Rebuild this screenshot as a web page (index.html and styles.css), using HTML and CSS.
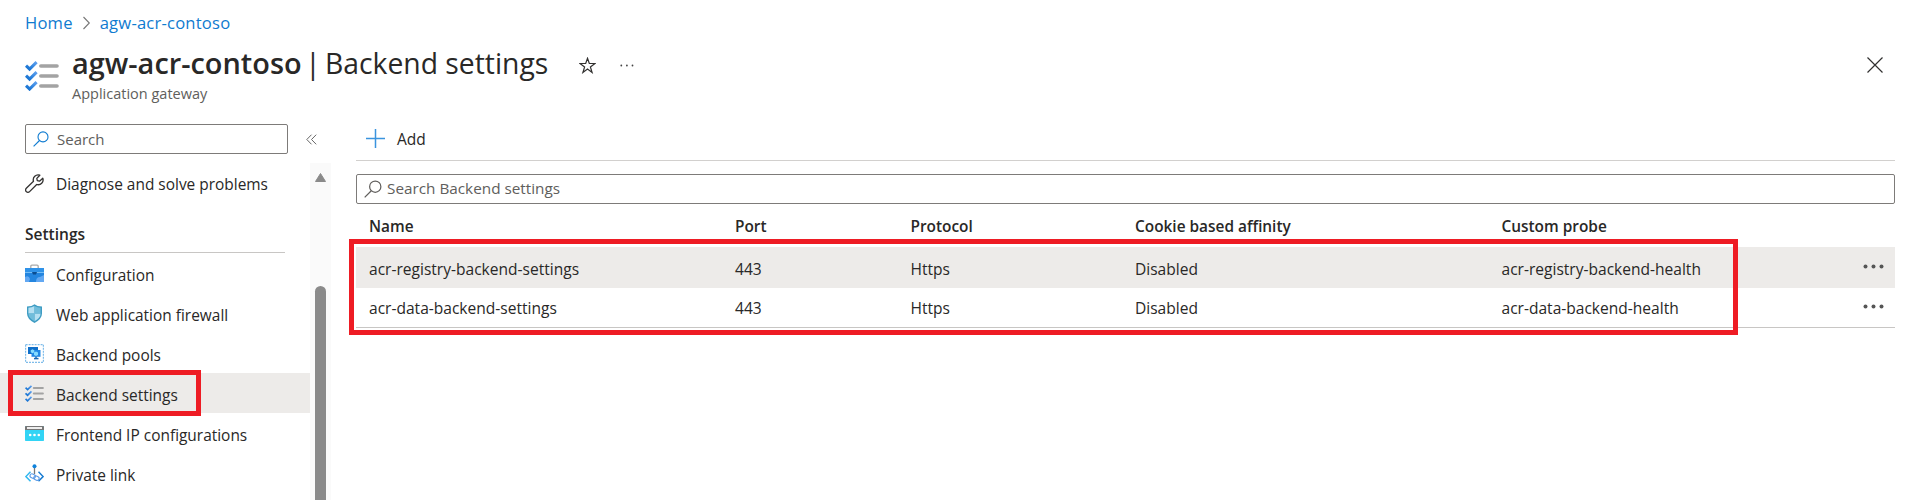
FILE: index.html
```html
<!DOCTYPE html>
<html lang="en">
<head>
<meta charset="utf-8">
<title>agw-acr-contoso | Backend settings</title>
<link rel="stylesheet" href="styles.css">
</head>
<body>
<svg class="defs" width="0" height="0">
  <defs>
    <linearGradient id="tick" x1="0" y1="1" x2="1" y2="0"><stop offset="0" stop-color="#0f6fd0"/><stop offset="1" stop-color="#5ea0ef"/></linearGradient>
    <symbol id="checklist" viewBox="0 0 34 30">
      <g fill="none" stroke="url(#tick)" stroke-width="3.1"><path d="M1 4.6 4.6 8 11.600 1.200"/><path d="M1 14.600 4.600 18 11.600 11.200"/><path d="M1 24.600 4.600 28 11.600 21.200"/></g>
      <g stroke="#a3a3a3" stroke-width="3.6" stroke-linecap="round"><path d="M15.800 5H32"/><path d="M15.800 15H32"/><path d="M15.800 25H32"/></g>
    </symbol>
    <symbol id="search" viewBox="0 0 16 16"><g fill="none" stroke="currentColor" stroke-width="1.1"><circle cx="10" cy="5.900" r="5"/><path d="M6.500 9.500.600 15.400"/></g></symbol>
  </defs>
</svg>
<nav class="breadcrumb"><a>Home</a><svg width="9" height="14" viewBox="0 0 9 14"><path d="M1.500 1 7.300 7 1.500 13" fill="none" stroke="#777" stroke-width="1.100"/></svg><a>agw-acr-contoso</a></nav>
<header class="header">
  <svg class="header-icon" width="34" height="30"><use href="#checklist"/></svg>
  <div class="titles">
    <div class="title-line">
      <h1 class="title"><b class="resource">agw-acr-contoso</b><span class="bar">|</span><span class="section">Backend settings</span></h1>
      <svg class="star" width="17" height="17" viewBox="0 0 17 17"><path d="M8.500 1.300 10.300 6.500H16L11.400 9.900 13.100 15.500 8.500 12.100 3.900 15.500 5.600 9.900 1 6.500H6.700Z" fill="none" stroke="#323130" stroke-width="1.200"/></svg>
      <svg class="more" width="14" height="3" viewBox="0 0 14 3" fill="#444"><circle cx="1.300" cy="1.500" r=".9"/><circle cx="6.900" cy="1.500" r=".9"/><circle cx="12.500" cy="1.500" r=".9"/></svg>
    </div>
    <div class="subtitle">Application gateway</div>
  </div>
  <svg class="close" width="16" height="16" viewBox="0 0 16 16"><path d="M.5.5 15.500 15.500M15.500.5.5 15.500" stroke="#323130" stroke-width="1.200"/></svg>
</header>
<div class="body">
  <aside class="sidebar">
    <div class="side-top">
      <div class="search side-search"><svg width="16" height="16"><use href="#search"/></svg><span class="t-search">Search</span></div>
      <svg class="collapse" width="11" height="11" viewBox="0 0 11 11"><path d="M5.500.7.800 5.500 5.500 10.300M10.200.7 5.500 5.500 10.200 10.300" fill="none" stroke="#666" stroke-width="1"/></svg>
    </div>
    <div class="side-scroll">
      <div class="menu">
        <div class="item first">
          <svg width="19" height="19" viewBox="0 0 19 19"><path d="M14.800 1.200A4.900 4.900 0 0 0 8.500 7.300L1.300 14.300A2.200 2.200 0 0 0 4.600 17.600L11.700 10.500A4.900 4.900 0 0 0 17.800 4.200L14.500 7.200 12.300 6.700 11.800 4.400Z" fill="none" stroke="#323130" stroke-width="1.300" stroke-linejoin="round"/></svg>
          <span class="t-diagnose">Diagnose and solve problems</span></div>
        <h2 class="group">Settings</h2>
        <div class="item">
          <svg width="19" height="19" viewBox="0 0 19 19"><path d="M5.800 4V2.300Q5.800 1.200 6.900 1.200H12.100Q13.200 1.200 13.200 2.300V4" fill="none" stroke="#aaa" stroke-width="1.300"/><rect y="4" width="19" height="14" rx=".8" fill="#2385df"/><path d="M0 4H19V8H0Z" fill="#2f92e8"/><path d="M0 8H19V9H0Z" fill="#76bdf5"/><path d="M7 8H12L11 10.500H8Z" fill="#0b4d91"/><path d="M0 13Q4 11 5 15L4 18H0ZM11 18Q11 13 15 13L19 11V18Z" fill="#63a8f2"/></svg>
          <span class="t-config">Configuration</span></div>
        <div class="item">
          <svg width="19" height="19" viewBox="0 0 19 19"><path d="M9.500.2Q12 2.500 17 2.500V9.500Q17 15 9.500 19 2 15 2 9.500V2.500Q7 2.500 9.500.2Z" fill="#3e9cc3"/><path d="M9.500 2Q6.500 3.700 3.400 3.800V9.500H9.500ZM9.500 9.500H15.600Q15.500 14 9.500 17.300Z" fill="#b5e0f2"/><path d="M9.500 2Q12.500 3.700 15.600 3.800V9.500H9.500ZM9.500 9.500H3.400Q3.500 14 9.500 17.300Z" fill="#70bddb"/></svg>
          <span class="t-waf">Web application firewall</span></div>
        <div class="item">
          <svg width="19" height="19" viewBox="0 0 19 19"><rect x=".6" y=".6" width="17.800" height="17.800" fill="none" stroke="#80bdea" stroke-width="1.200" stroke-dasharray="2 1"/><path d="M3 3H13V10H3Z" fill="#0f6fc9"/><path d="M6.500 6H15.500V12.800H6.500Z" fill="#2088e4"/><path d="M9 14.600H13.500" stroke="#1769b6" stroke-width="1.500"/><path d="M11 12.500V14.500" stroke="#1769b6" stroke-width="1.500"/><path d="M7.500 5.300 9.300 6.300V8.300L7.500 9.300 5.700 8.300V6.300ZM11 7.500 13 8.600V11L11 12.100 9 11V8.600Z" fill="#85dcff"/></svg>
          <span class="t-pools">Backend pools</span></div>
        <div class="item selected">
          <svg width="19" height="17"><use href="#checklist"/></svg>
          <span class="t-settings">Backend settings</span><i class="mark mark-menu"></i></div>
        <div class="item">
          <svg width="19" height="17" viewBox="0 0 19 17"><rect y="1" width="19" height="15" rx=".8" fill="#32d4f5"/><path d="M0 5V2Q0 1 1 1H18Q19 1 19 2V5Z" fill="#777"/><rect x="2" y="2" width="15" height="2" fill="#eee"/><g fill="#fff"><circle cx="5.200" cy="10" r="1.300"/><circle cx="9.500" cy="10" r="1.300"/><circle cx="13.800" cy="10" r="1.300"/></g></svg>
          <span class="t-frontend">Frontend IP configurations</span></div>
        <div class="item">
          <svg width="19" height="19" viewBox="0 0 19 19"><path d="M5.500 7.800.9 12.600 5.500 17.200" fill="none" stroke="#32b8ef" stroke-width="1.500"/><path d="M13.500 7.800 18.100 12.600 13.500 17.200" fill="none" stroke="#177bd2" stroke-width="1.500"/><path d="M9.500 3V10" stroke="#777" stroke-width="1.300"/><circle cx="9.500" cy="2.300" r="2" fill="#0f83dc"/><g fill="none" stroke="#5d9be6" stroke-width="1.100"><rect x="5" y="10.300" width="5.500" height="3.800" rx="1.900" transform="rotate(25 8 12)"/><rect x="8.700" y="12" width="5.500" height="3.800" rx="1.900" transform="rotate(25 11 14)"/></g></svg>
          <span class="t-private">Private link</span></div>
      </div>
      <div class="track"><svg width="11" height="9" viewBox="0 0 11 9"><path d="M5.500.5 10.500 8.500H.5Z" fill="#8a8a8a" stroke="#8a8a8a" stroke-linejoin="round"/></svg><div class="thumb"></div></div>
    </div>
  </aside>
  <main class="main">
    <div class="toolbar"><svg width="19" height="19" viewBox="0 0 19 19"><path d="M9.500 0V19M0 9.500H19" stroke="#3a94de" stroke-width="1.500"/></svg><span class="t-add">Add</span></div>
    <div class="search main-search"><svg width="18" height="18"><use href="#search"/></svg><span class="t-filter">Search Backend settings</span></div>
    <div class="table">
      <div class="row head"><span class="h-name">Name</span><span class="h-port">Port</span><span class="h-protocol">Protocol</span><span class="h-cookie">Cookie based affinity</span><span class="h-probe">Custom probe</span></div>
      <div class="rows">
        <div class="row hover"><span class="c-name">acr-registry-backend-settings</span><span class="c-port">443</span><span class="c-protocol">Https</span><span class="c-cookie">Disabled</span><span class="c-probe">acr-registry-backend-health</span><svg class="dots" width="21" height="5" viewBox="0 0 21 5" fill="#555"><circle cx="2.500" cy="2.500" r="2"/><circle cx="10.500" cy="2.500" r="2"/><circle cx="18.500" cy="2.500" r="2"/></svg></div>
        <div class="row last"><span class="c-name">acr-data-backend-settings</span><span class="c-port">443</span><span class="c-protocol">Https</span><span class="c-cookie">Disabled</span><span class="c-probe">acr-data-backend-health</span><svg class="dots" width="21" height="5" viewBox="0 0 21 5" fill="#555"><circle cx="2.500" cy="2.500" r="2"/><circle cx="10.500" cy="2.500" r="2"/><circle cx="18.500" cy="2.500" r="2"/></svg></div>
        <i class="mark mark-table"></i>
      </div>
    </div>
  </main>
</div>
</body>
</html>
```
FILE: styles.css
```css
* { box-sizing: border-box; }
body { margin: 0; height: 500px; overflow: hidden; background: #fff; color: #292827; font: 15.5px/20px "Open Sans", "Noto Sans", sans-serif; white-space: nowrap; display: flex; flex-direction: column; }
.defs { position: absolute; }
svg { display: block; flex: none; }
.breadcrumb { height: 46px; padding-left: 25px; display: flex; align-items: center; gap: 9px; color: #0f7bd0; font-size: 16.6px; letter-spacing: .2px; }
.header { height: 78px; padding-left: 25px; display: flex; align-items: flex-start; }
.header-icon { margin-top: 15px; }
.titles { margin-left: 13px; }
.title-line { display: flex; height: 36px; }
.title { margin: -1px 0 0; font-size: 28.9px; line-height: 36px; font-weight: 400; display: flex; }
.resource { font-weight: 600; width: 229px; }
.bar { width: 24px; text-align: center; }
.section { width: 223px; font-size: 28.3px; }
.star { margin: 11px 0 0 31px; }
.more { margin: 18px 0 0 24px; }
.subtitle { font-size: 14.5px; line-height: 20px; color: #605e5c; margin-top: 2px; }
.close { margin: 11px 35px 0 auto; }
.body { flex: 1; min-height: 0; display: flex; }
.sidebar { width: 331px; display: flex; flex-direction: column; }
.side-top { height: 39px; padding-left: 25px; display: flex; align-items: flex-start; }
.search { height: 30px; border: 1px solid #7d7b79; border-radius: 2px; display: flex; align-items: center; color: #605e5c; font-size: 15.3px; }
.side-search { width: 263px; padding-left: 7px; gap: 8px; font-size: 15px; }
.side-search svg { color: #0f7bd0; }
.collapse { margin: 10px 0 0 18px; }
.side-scroll { flex: 1; min-height: 0; display: flex; }
.menu { width: 310px; font-size: 15.45px; }
.item { height: 40px; padding-left: 25px; display: flex; align-items: center; gap: 12px; position: relative; }
.item span { padding-top: 4px; }
.first span { padding-top: 2px; }
.group { margin: 0 25px 0 25px; height: 50px; padding-top: 21px; border-bottom: 1px solid #c8c6c4; font-size: 15.5px; font-weight: 600; line-height: 20px; }
.selected { background: #edebe9; }
.mark { position: absolute; border: 5px solid #ee1c24; }
.mark-menu { left: 8px; top: -3px; width: 193px; height: 46px; }
.track { width: 21px; background: #fafafa; padding-top: 10px; display: flex; flex-direction: column; align-items: center; gap: 104px; }
.thumb { width: 11px; flex: 1; background: #8a8a8a; border-radius: 5.5px 5.5px 0 0; }
.main { margin-left: 25px; width: 1539px; }
.toolbar { height: 37px; border-bottom: 1px solid #d2d0ce; padding: 0 0 8px 10px; display: flex; align-items: center; gap: 12px; }
.toolbar span { padding-top: 2px; }
.main-search { margin-top: 13px; padding-left: 7px; gap: 5px; }
.main-search span { padding-bottom: 2px; }
.row { display: grid; grid-template-columns: 366px 175.5px 224.5px 366.5px 1fr 21px; padding: 0 11px 0 13px; align-items: center; height: 41px; font-size: 15.55px; }
.head { height: 43px; padding-top: 2px; font-weight: 600; font-size: 15.4px; }
.rows { position: relative; }
.hover { background: #edebe9; }
.hover span { padding-top: 3px; }
.last { height: 40px; border-bottom: 1px solid #c8c6c4; }
.last span { padding-top: 1px; }
.dots { margin-bottom: 2px; }
.mark-table { left: -7px; top: -8px; width: 1389px; height: 96px; }
```
